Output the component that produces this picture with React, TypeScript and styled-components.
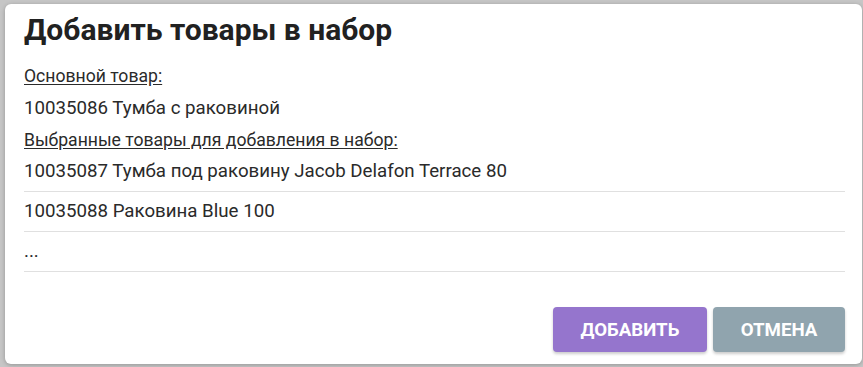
import React from "react";
import styled, { createGlobalStyle } from "styled-components";

const GlobalStyle = createGlobalStyle`
  html, body {
    margin: 0;
    padding: 0;
    background: #c6c6c6;
    font-family: Roboto, "Noto Sans", sans-serif;
  }
`;

const Backdrop = styled.div`
  width: 863px;
  height: 367px;
  padding: 4px 1px 3px 5px;
  box-sizing: border-box;
  overflow: hidden;
`;

const Dialog = styled.div`
  height: 360px;
  box-sizing: border-box;
  background: #ffffff;
  border-radius: 6px;
  box-shadow: 0 1px 4px rgba(0, 0, 0, 0.25);
  padding: 9px 17px 12px 19px;
  display: flex;
  flex-direction: column;
`;

const Title = styled.h2`
  margin: 0;
  font-size: 30px;
  line-height: 34px;
  font-weight: 700;
  color: #212121;
`;

const Content = styled.div`
  margin-top: 17px;
  display: flex;
  flex-direction: column;
  color: #2a2a2a;
  font-size: 18.7px;
`;

const Label = styled.div<{ $gap: number }>`
  margin-top: ${(p) => p.$gap}px;
  font-size: 17.6px;
  line-height: 24px;
  text-decoration: underline;
  text-underline-offset: 2px;
`;

const Line = styled.div`
  margin-top: 8px;
  line-height: 24px;
`;

const Row = styled.div`
  padding: 7px 0 8px;
  line-height: 24px;
  border-bottom: 1px solid #e0e0e0;
`;

const Actions = styled.div`
  margin-top: auto;
  display: flex;
  justify-content: flex-end;
  gap: 6px;
`;

const Button = styled.button<{ $color: string; $w: number }>`
  width: ${(p) => p.$w}px;
  height: 45px;
  border: none;
  border-radius: 4px;
  background: ${(p) => p.$color};
  color: #ffffff;
  font-family: Roboto, sans-serif;
  font-size: 18.7px;
  font-weight: 700;
  text-transform: uppercase;
  box-shadow: 0 2px 3px rgba(0, 0, 0, 0.2);
  cursor: pointer;
`;

const selected = [
  "10035087 Тумба под раковину Jacob Delafon Terrace 80",
  "10035088 Раковина Blue 100",
  "...",
];

export default function App() {
  return (
    <>
      <GlobalStyle />
      <Backdrop>
        <Dialog>
          <Title>Добавить товары в набор</Title>
          <Content>
            <Label $gap={0}>Основной товар:</Label>
            <Line>10035086 Тумба с раковиной</Line>
            <Label $gap={8}>Выбранные товары для добавления в набор:</Label>
            {selected.map((s) => (
              <Row key={s}>{s}</Row>
            ))}
          </Content>
          <Actions>
            <Button $color="#9575cd" $w={154}>Добавить</Button>
            <Button $color="#90a4ae" $w={132}>Отмена</Button>
          </Actions>
        </Dialog>
      </Backdrop>
    </>
  );
}
